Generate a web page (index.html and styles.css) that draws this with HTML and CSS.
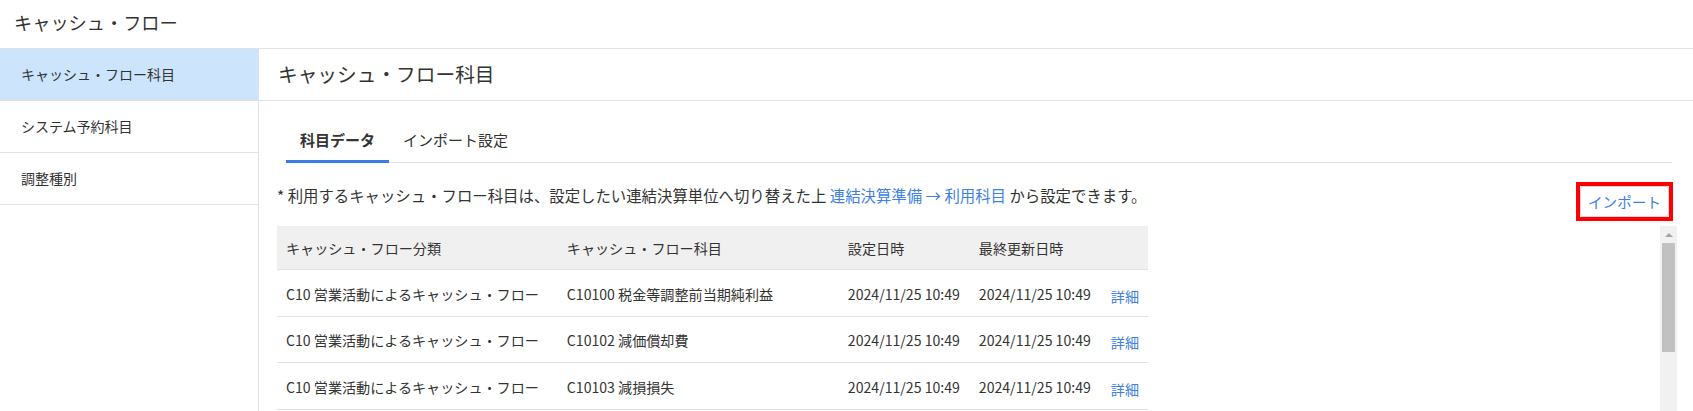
FILE: index.html
```html
<!DOCTYPE html>
<html lang="ja">
<head>
    <meta charset="UTF-8">
    <meta name="viewport" content="width=device-width, initial-scale=1.0">
    <title>キャッシュ・フロー</title>
    <link rel="stylesheet" href="styles.css">
</head>
<body>
    <div class="topbar">キャッシュ・フロー</div>
    <div class="layout">
        <div class="sidebar">
            <div class="side-item active">キャッシュ・フロー科目</div>
            <div class="side-item">システム予約科目</div>
            <div class="side-item">調整種別</div>
        </div>
        <div class="main">
            <div class="main-header">キャッシュ・フロー科目</div>
            <div class="main-body">
                <div class="tabs">
                    <div class="tab selected">科目データ</div>
                    <div class="tab">インポート設定</div>
                </div>
                <div class="note-row">
                    <p class="note">* 利用するキャッシュ・フロー科目は、設定したい連結決算単位へ切り替えた上 <a href="#">連結決算準備 → 利用科目</a> から設定できます。</p>
                    <div class="highlight"><button class="import-btn">インポート</button></div>
                </div>
                <div class="table-area">
                    <div class="table-wrap">
                        <table class="data">
                            <tr>
                                <th class="c1">キャッシュ・フロー分類</th>
                                <th class="c2">キャッシュ・フロー科目</th>
                                <th class="c3">設定日時</th>
                                <th class="c4">最終更新日時</th>
                                <th class="c5"></th>
                            </tr>
                            <tr>
                                <td>C10 営業活動によるキャッシュ・フロー</td>
                                <td>C10100 税金等調整前当期純利益</td>
                                <td>2024/11/25 10:49</td>
                                <td>2024/11/25 10:49</td>
                                <td><a href="#">詳細</a></td>
                            </tr>
                            <tr>
                                <td>C10 営業活動によるキャッシュ・フロー</td>
                                <td>C10102 減価償却費</td>
                                <td>2024/11/25 10:49</td>
                                <td>2024/11/25 10:49</td>
                                <td><a href="#">詳細</a></td>
                            </tr>
                            <tr>
                                <td>C10 営業活動によるキャッシュ・フロー</td>
                                <td>C10103 減損損失</td>
                                <td>2024/11/25 10:49</td>
                                <td>2024/11/25 10:49</td>
                                <td><a href="#">詳細</a></td>
                            </tr>
                        </table>
                    </div>
                    <div class="scrollbar">
                        <div class="scroll-arrow"></div>
                        <div class="scroll-thumb"></div>
                    </div>
                </div>
            </div>
        </div>
    </div>
</body>
</html>
```

FILE: styles.css
```css
body {
    margin: 0;
    font-family: "Noto Sans CJK JP", "Noto Sans", sans-serif;
    color: #333;
    background: white;
    overflow: hidden;
}
a {
    color: #3d7fe3;
    text-decoration: none;
}
.topbar {
    height: 48px;
    line-height: 45px;
    padding-left: 14px;
    font-size: 18.2px;
    border-bottom: 1px solid #e2e2e2;
}
.layout {
    display: flex;
    height: 362px;
}
.sidebar {
    width: 258px;
    border-right: 1px solid #e2e2e2;
    flex-shrink: 0;
}
.side-item {
    height: 51px;
    line-height: 50px;
    padding-left: 21px;
    font-size: 14px;
    border-bottom: 1px solid #e2e2e2;
}
.side-item.active {
    background-color: #cce5fc;
}
.main {
    flex: 1;
    min-width: 0;
}
.main-header {
    height: 51px;
    line-height: 50px;
    padding-left: 19px;
    font-size: 19.7px;
    border-bottom: 1px solid #e2e2e2;
}
.main-body {
    padding: 18px 16px 0 18px;
}
.tabs {
    display: flex;
    margin: 0 5px 0 9px;
    border-bottom: 1px solid #e2e2e2;
}
.tab {
    height: 41px;
    line-height: 42px;
    padding: 0 14px;
    font-size: 15px;
    border-bottom: 3px solid transparent;
    margin-bottom: -1px;
}
.tab.selected {
    font-weight: bold;
    border-bottom-color: #3b7de2;
}
.note-row {
    display: flex;
    justify-content: space-between;
    align-items: flex-start;
    height: 63px;
}
.note {
    margin: 21px 0 0 0;
    font-size: 15.4px;
    line-height: 22px;
}
.highlight {
    margin-top: 19px;
    margin-right: 4px;
    border: 4px solid #f00;
}
.import-btn {
    display: block;
    width: 89px;
    height: 31px;
    padding: 0;
    background: white;
    color: #3d7fe3;
    border: 1px solid #d6d6e6;
    border-radius: 3px;
    font-family: inherit;
    font-size: 14.6px;
    cursor: pointer;
}
.table-area {
    display: flex;
    justify-content: space-between;
}
.data {
    border-collapse: collapse;
    width: 871px;
    font-size: 14.1px;
}
.data th {
    background-color: #f0f0f0;
    font-weight: normal;
    text-align: left;
    height: 43px;
    padding: 0 9px;
    border-bottom: 1px solid #e2e2e2;
}
.data td {
    height: 43.5px;
    padding: 2px 9px 0 9px;
    border-bottom: 1px solid #e2e2e2;
    white-space: nowrap;
}
.data td:last-child a {
    position: relative;
    top: 2px;
}
.c1 { width: 263px; }
.c2 { width: 264px; }
.c3 { width: 113px; }
.c4 { width: 114px; }
.scrollbar {
    width: 17px;
    height: 200px;
    background-color: #f1f1f1;
}
.scroll-arrow {
    height: 17px;
    display: flex;
    align-items: center;
    justify-content: center;
}
.scroll-arrow::before {
    content: "";
    border-left: 4px solid transparent;
    border-right: 4px solid transparent;
    border-bottom: 4px solid #a3a3a3;
}
.scroll-thumb {
    margin: 0 2px;
    height: 109px;
    background-color: #c1c1c1;
}
```
